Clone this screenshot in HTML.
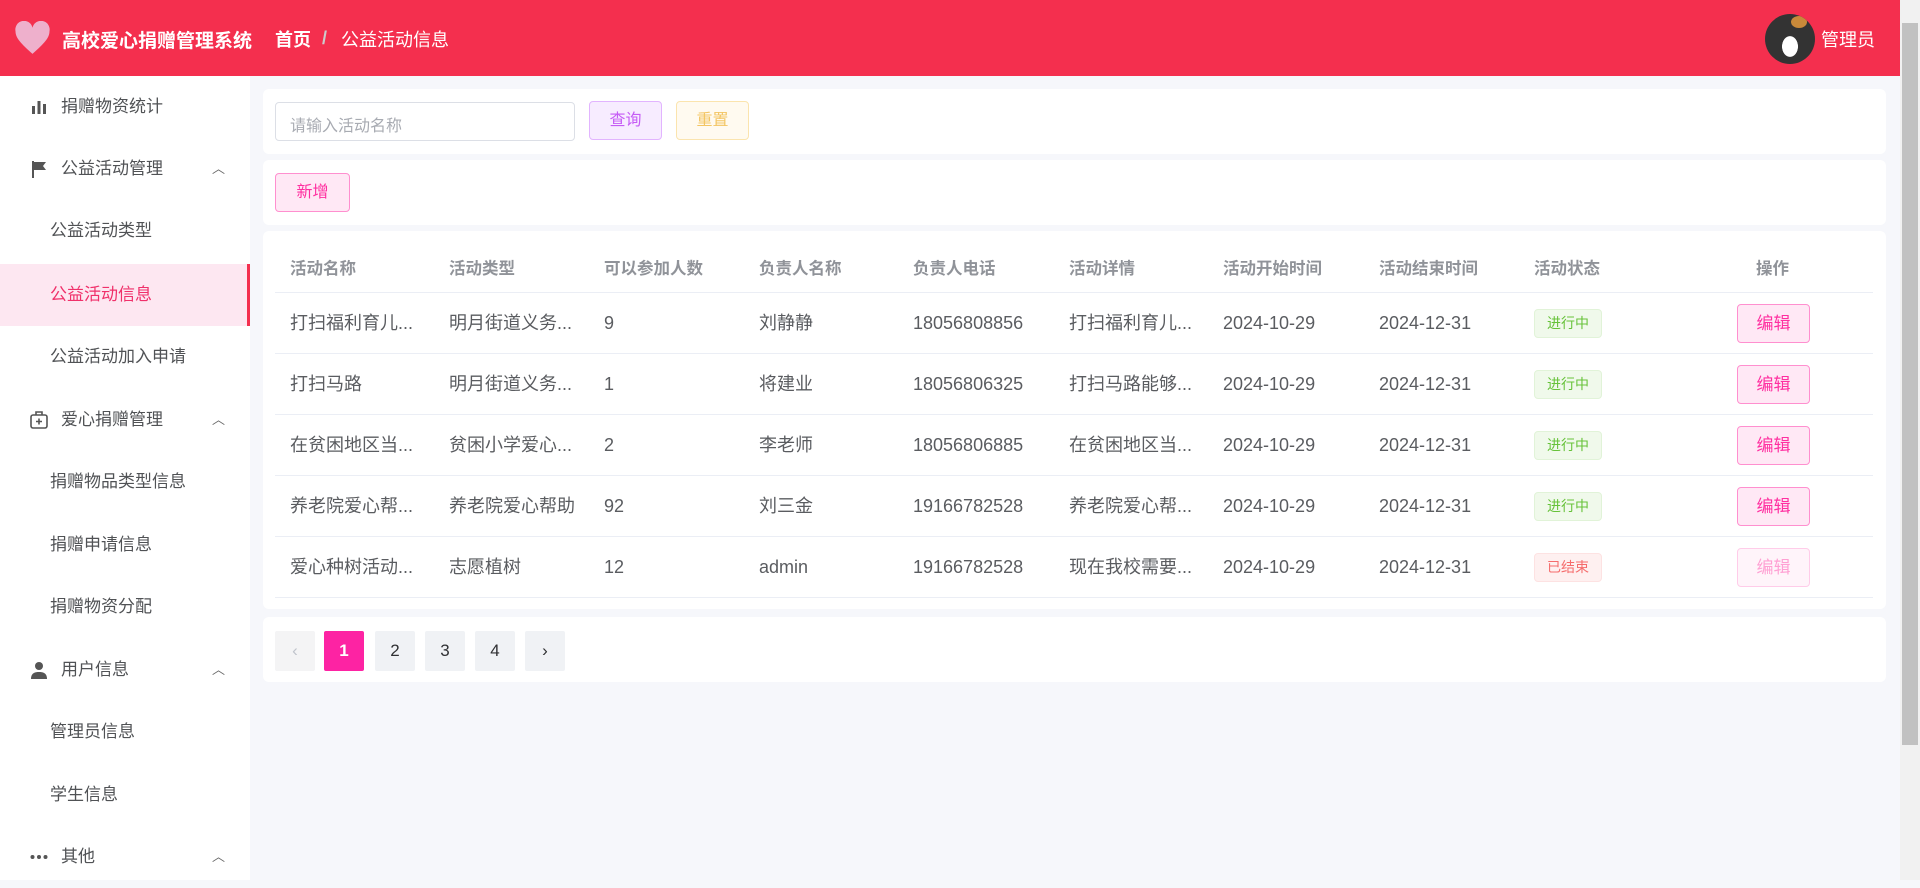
<!DOCTYPE html>
<html><head><meta charset="utf-8"><style>
*{box-sizing:border-box;margin:0;padding:0}
body{width:1920px;height:880px;overflow:hidden;font-family:"Liberation Sans","Noto Sans CJK SC",sans-serif;background:#f6f7fb;position:relative;color:#606266}
.hd{position:absolute;left:0;top:0;width:1900px;height:76px;background:#f42f4e;color:#fff}
.hd .t{position:absolute;left:62px;top:26px;font-size:19px;font-weight:bold}
.hd .b1{position:absolute;left:275px;top:26px;font-size:18px;font-weight:bold}
.hd .sl{position:absolute;left:322px;top:28px;font-size:18px;color:#ccc;font-weight:bold}
.hd .b2{position:absolute;left:341px;top:26px;font-size:18px}
.av{position:absolute;left:1765px;top:14px;width:50px;height:50px;border-radius:50%;background:radial-gradient(ellipse at 50% 65%,#fff 0 22%,#333 23% 100%);overflow:hidden}
.av:before{content:"";position:absolute;left:26px;top:2px;width:16px;height:12px;background:#c8893a;border-radius:50%}
.hd .u{position:absolute;left:1821px;top:26px;font-size:18px}
.sb{position:absolute;left:1900px;top:0;width:20px;height:880px;background:#f1f1f1}
.sb i{position:absolute;left:2px;top:23px;width:16px;height:722px;background:#c1c1c1}
.side{position:absolute;left:0;top:76px;width:250px;height:804px;background:#fff}
.it{position:absolute;left:0;width:250px;height:62px;font-size:17px;color:#505255;line-height:62px}
.it.m{padding-left:61px}.it.s{padding-left:50px}
.it.a{background:#fde7f1;color:#f0306a;border-right:3px solid #f42f4e}
.it .ic{position:absolute;left:30px;top:22px;width:18px;height:18px}
.it .ar{position:absolute;left:212px;top:0;font-size:13px;color:#666}
.card{position:absolute;left:263px;width:1623px;background:#fff;border-radius:6px}
.inp{position:absolute;left:275px;top:102px;width:300px;height:39px;border:1px solid #dcdfe6;border-radius:4px;font-size:16px;color:#a8abb2;padding:9px 14px}
.btn{position:absolute;height:39px;border-radius:4px;font-size:16px;text-align:center;line-height:37px}
.row{position:absolute;left:275px;width:1598px;border-bottom:1px solid #ebeef5;height:61px}
.c{position:absolute;font-size:18px;top:0;line-height:60px;white-space:nowrap;color:#5a5c60}
.hdr .c{font-weight:bold;color:#909399;font-size:16.5px}
.tag{position:absolute;left:1259px;top:16px;width:68px;height:29px;border-radius:4px;font-size:14px;text-align:center;line-height:27px}
.g{background:#f0f9eb;border:1px solid #e1f3d8;color:#67c23a}
.r{background:#fef0f0;border:1px solid #fde2e2;color:#f56c6c}
.ed{position:absolute;left:1462px;top:11px;width:73px;height:39px;border:1px solid #ff8fcf;background:#ffe8f5;color:#ff2fa0;border-radius:4px;text-align:center;line-height:37px;font-size:17px}
.pg{position:absolute;top:631px;width:40px;height:40px;background:#f0f2f5;border-radius:2px;text-align:center;line-height:40px;font-size:17px;color:#303133}
</style></head><body>
<div class="hd">
<svg style="position:absolute;left:14px;top:21px" width="37" height="34" viewBox="0 0 32 30"><path d="M16 29 C6 20 1 15 1 9 A7.5 7.5 0 0 1 16 6 A7.5 7.5 0 0 1 31 9 C31 15 26 20 16 29Z" fill="#eeb0cc"/></svg>
<div class="t">高校爱心捐赠管理系统</div><div class="b1">首页</div><div class="sl">/</div><div class="b2">公益活动信息</div>
<div class="av"></div><div class="u">管理员</div>
</div>
<div class="sb"><i></i></div>
<div class="side">
<div class="it m" style="top:0"><svg class="ic" viewBox="0 0 18 18"><rect x="2" y="8" width="3" height="8" fill="#555"/><rect x="7.5" y="3" width="3" height="13" fill="#555"/><rect x="13" y="6" width="3" height="10" fill="#555"/></svg>捐赠物资统计</div>
<div class="it m" style="top:62px"><svg class="ic" viewBox="0 0 18 18"><path d="M3 1v17" stroke="#555" stroke-width="2"/><path d="M4 2h12l-3 4 3 4H4z" fill="#555"/></svg>公益活动管理<span class="ar">︿</span></div>
<div class="it s" style="top:124px">公益活动类型</div>
<div class="it s a" style="top:188px">公益活动信息</div>
<div class="it s" style="top:250px">公益活动加入申请</div>
<div class="it m" style="top:313px"><svg class="ic" viewBox="0 0 18 18"><rect x="1" y="4" width="16" height="13" rx="2" fill="none" stroke="#555" stroke-width="1.6"/><path d="M6 4V1h6v3M9 7.5v6M6 10.5h6" stroke="#555" stroke-width="1.6" fill="none"/></svg>爱心捐赠管理<span class="ar">︿</span></div>
<div class="it s" style="top:375px">捐赠物品类型信息</div>
<div class="it s" style="top:438px">捐赠申请信息</div>
<div class="it s" style="top:500px">捐赠物资分配</div>
<div class="it m" style="top:563px"><svg class="ic" viewBox="0 0 18 18"><circle cx="9" cy="5" r="4" fill="#555"/><path d="M1 18c0-6 4-7 8-7s8 1 8 7z" fill="#555"/></svg>用户信息<span class="ar">︿</span></div>
<div class="it s" style="top:625px">管理员信息</div>
<div class="it s" style="top:688px">学生信息</div>
<div class="it m" style="top:750px"><svg class="ic" viewBox="0 0 18 18"><circle cx="2.5" cy="9" r="2" fill="#555"/><circle cx="9" cy="9" r="2" fill="#555"/><circle cx="15.5" cy="9" r="2" fill="#555"/></svg>其他<span class="ar">︿</span></div>
</div>
<div class="card" style="top:89px;height:65px"></div>
<div class="card" style="top:160px;height:65px"></div>
<div class="card" style="top:231px;height:378px"></div>
<div class="card" style="top:617px;height:65px"></div>
<div class="inp">请输入活动名称</div>
<div class="btn" style="left:589px;top:101px;width:73px;background:#f7ecff;border:1px solid #e2b4ff;color:#c55cf5">查询</div>
<div class="btn" style="left:676px;top:101px;width:73px;background:#fffaf0;border:1px solid #fbe4ae;color:#f3c563">重置</div>
<div class="btn" style="left:275px;top:173px;width:75px;background:#ffe8f5;border:1px solid #ff8fcf;color:#ff2fa0">新增</div>
<div class="row hdr" style="top:245px;height:48px"><span class="c" style="left:15px;line-height:48px">活动名称</span><span class="c" style="left:174px;line-height:48px">活动类型</span><span class="c" style="left:329px;line-height:48px">可以参加人数</span><span class="c" style="left:484px;line-height:48px">负责人名称</span><span class="c" style="left:638px;line-height:48px">负责人电话</span><span class="c" style="left:794px;line-height:48px">活动详情</span><span class="c" style="left:948px;line-height:48px">活动开始时间</span><span class="c" style="left:1104px;line-height:48px">活动结束时间</span><span class="c" style="left:1259px;line-height:48px">活动状态</span><span class="c" style="left:1481px;line-height:48px">操作</span></div>
<div class="row" style="top:293px"><span class="c" style="left:15px">打扫福利育儿...</span><span class="c" style="left:174px">明月街道义务...</span><span class="c" style="left:329px">9</span><span class="c" style="left:484px">刘静静</span><span class="c" style="left:638px">18056808856</span><span class="c" style="left:794px">打扫福利育儿...</span><span class="c" style="left:948px">2024-10-29</span><span class="c" style="left:1104px">2024-12-31</span><span class="tag g">进行中</span><span class="ed">编辑</span></div>
<div class="row" style="top:354px"><span class="c" style="left:15px">打扫马路</span><span class="c" style="left:174px">明月街道义务...</span><span class="c" style="left:329px">1</span><span class="c" style="left:484px">将建业</span><span class="c" style="left:638px">18056806325</span><span class="c" style="left:794px">打扫马路能够...</span><span class="c" style="left:948px">2024-10-29</span><span class="c" style="left:1104px">2024-12-31</span><span class="tag g">进行中</span><span class="ed">编辑</span></div>
<div class="row" style="top:415px"><span class="c" style="left:15px">在贫困地区当...</span><span class="c" style="left:174px">贫困小学爱心...</span><span class="c" style="left:329px">2</span><span class="c" style="left:484px">李老师</span><span class="c" style="left:638px">18056806885</span><span class="c" style="left:794px">在贫困地区当...</span><span class="c" style="left:948px">2024-10-29</span><span class="c" style="left:1104px">2024-12-31</span><span class="tag g">进行中</span><span class="ed">编辑</span></div>
<div class="row" style="top:476px"><span class="c" style="left:15px">养老院爱心帮...</span><span class="c" style="left:174px">养老院爱心帮助</span><span class="c" style="left:329px">92</span><span class="c" style="left:484px">刘三金</span><span class="c" style="left:638px">19166782528</span><span class="c" style="left:794px">养老院爱心帮...</span><span class="c" style="left:948px">2024-10-29</span><span class="c" style="left:1104px">2024-12-31</span><span class="tag g">进行中</span><span class="ed">编辑</span></div>
<div class="row" style="top:537px"><span class="c" style="left:15px">爱心种树活动...</span><span class="c" style="left:174px">志愿植树</span><span class="c" style="left:329px">12</span><span class="c" style="left:484px">admin</span><span class="c" style="left:638px">19166782528</span><span class="c" style="left:794px">现在我校需要...</span><span class="c" style="left:948px">2024-10-29</span><span class="c" style="left:1104px">2024-12-31</span><span class="tag r">已结束</span><span class="ed" style="opacity:.45">编辑</span></div>
<div class="pg" style="left:275px;background:#f4f4f5;color:#c0c4cc">‹</div>
<div class="pg" style="left:324px;background:#fd23a3;color:#fff;font-weight:bold">1</div>
<div class="pg" style="left:375px">2</div>
<div class="pg" style="left:425px">3</div>
<div class="pg" style="left:475px">4</div>
<div class="pg" style="left:525px">›</div>
</body></html>
